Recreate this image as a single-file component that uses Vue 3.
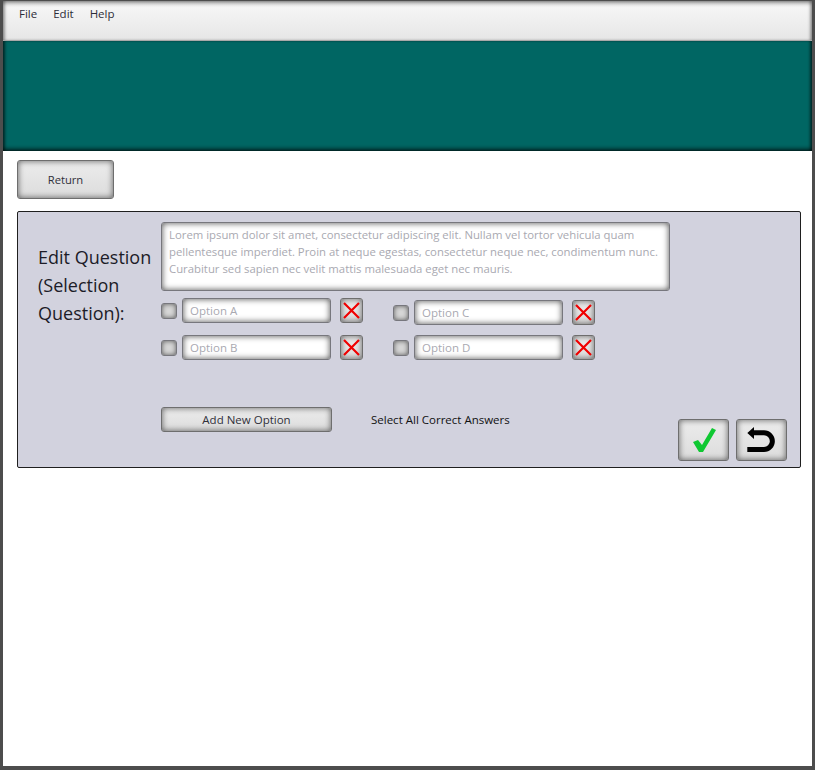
<template>
  <div class="window">
    <!-- menu -->
    <div class="menu-bar">
      <span v-for="item in menus" :key="item" class="menu-item">{{ item }}</span>
    </div>
    <div class="banner"></div>

    <div class="content">
      <button class="btn return-btn">Return</button>

      <div class="panel">
        <div class="question-label">Edit Question (Selection Question):</div>

        <div class="editor">
          <div class="input question-text">
            Lorem ipsum dolor sit amet, consectetur adipiscing elit. Nullam vel tortor vehicula quam pellentesque imperdiet. Proin at neque egestas, consectetur neque nec, condimentum nunc. Curabitur sed sapien nec velit mattis malesuada eget nec mauris.
          </div>

          <div class="options">
            <div v-for="(col, i) in columns" :key="i" :class="['option-col', { shifted: i === 1 }]">
              <div v-for="opt in col" :key="opt" class="option-row">
                <span class="check"></span>
                <div class="input option-input">{{ opt }}</div>
                <button class="btn remove-btn">
                  <svg width="17" height="17" viewBox="0 0 17 17">
                    <path d="M1 1 16 16M16 1 1 16" stroke="#f00000" stroke-width="2.2" fill="none" />
                  </svg>
                </button>
              </div>
            </div>
          </div>

          <div class="footer-row">
            <button class="btn add-btn">Add New Option</button>
            <span class="hint">Select All Correct Answers</span>
            <div class="actions">
              <button class="btn action-btn">
                <svg width="49" height="40" viewBox="0 0 49 40">
                  <path d="M14 22 19 20 23 25 33 8 37 10 24 32H20Z" fill="#0fc832" />
                </svg>
              </button>
              <button class="btn action-btn">
                <svg width="49" height="40" viewBox="0 0 49 40">
                  <path d="M10.300 13 17 7V10.300H27A10.850 10.850 0 0 1 27 32H10.300V27H27A5.850 5.850 0 0 0 27 15.300H17V19Z" fill="#000" />
                </svg>
              </button>
            </div>
          </div>
        </div>
      </div>
    </div>
  </div>
</template>

<script setup>
const menus = ['File', 'Edit', 'Help']
const columns = [
  ['Option A', 'Option B'],
  ['Option C', 'Option D']
]
</script>

<style>
html,
body {
  margin: 0;
  background: #fff;
}
</style>

<style scoped>
.window {
  box-sizing: border-box;
  width: 815px;
  height: 770px;
  border: solid #4d4d4d;
  border-width: 1px 3px 4px 3px;
  background: #fff;
  font-family: "Open Sans", "Noto Sans", sans-serif;
  overflow: hidden;
}

.menu-bar {
  box-sizing: border-box;
  height: 40px;
  display: flex;
  align-items: flex-start;
  padding: 5px 0 0 16px;
  gap: 16px;
  background: linear-gradient(#f8f8f8, #e6e6e6);
  border-bottom: 1px solid #a9a9a9;
  box-shadow: inset 0 3px 4px -1px rgba(0, 0, 0, 0.45), inset 3px 0 3px -1px rgba(0, 0, 0, 0.3), inset -3px 0 3px -1px rgba(0, 0, 0, 0.3);
}

.menu-item {
  font-size: 11.500px;
  line-height: 16px;
  color: #2c2c38;
}

.banner {
  height: 110px;
  background: #006663;
  box-shadow: inset 0 -3px 4px -1px rgba(0, 0, 0, 0.7), inset 3px 0 3px -1px rgba(0, 0, 0, 0.5), inset -3px 0 3px -1px rgba(0, 0, 0, 0.5);
}

.content {
  padding: 9px 11px 0 14px;
}

.btn {
  box-sizing: border-box;
  display: flex;
  align-items: center;
  justify-content: center;
  padding: 0;
  border: 1px solid #6e6e6e;
  border-radius: 3px;
  background: linear-gradient(#ececec, #dcdcdc);
  box-shadow: inset 0 0 6px rgba(0, 0, 0, 0.6);
  font-family: inherit;
  font-size: 11.500px;
  color: #30303a;
}

.return-btn {
  width: 97px;
  height: 39px;
  font-size: 11.200px;
}

.panel {
  box-sizing: border-box;
  height: 257px;
  margin-top: 12px;
  display: flex;
  background: #d2d2de;
  border: 1px solid #1f1f1f;
  border-radius: 2px;
  padding: 10px 13px 6px 20px;
}

.question-label {
  flex: none;
  width: 123px;
  padding-top: 21px;
  font-size: 18px;
  line-height: 28px;
  color: #1c1c28;
}

.editor {
  flex: 1;
  display: flex;
  flex-direction: column;
}

.input {
  box-sizing: border-box;
  border: 1px solid #77777d;
  border-radius: 3px;
  background: #fff;
  box-shadow: inset 0 0 6px rgba(0, 0, 0, 0.7);
  color: #a9a9b1;
  font-size: 11.500px;
}

.question-text {
  width: 509px;
  height: 69px;
  padding: 3px 7px;
  font-size: 11.350px;
  line-height: 17px;
}

.options {
  display: flex;
  gap: 30px;
  margin-top: 7px;
}

.option-col {
  display: flex;
  flex-direction: column;
  gap: 12px;
}

.option-col.shifted {
  gap: 10px;
  padding-top: 2px;
}

.option-row {
  display: flex;
  align-items: center;
  height: 25px;
}

.check {
  box-sizing: border-box;
  width: 16px;
  height: 16px;
  margin-right: 5px;
  border: 1px solid #77777d;
  border-radius: 3px;
  background: #d6d6d6;
  box-shadow: inset 0 0 5px rgba(0, 0, 0, 0.6);
}

.option-input {
  width: 149px;
  height: 25px;
  padding-left: 7px;
  line-height: 23px;
}

.remove-btn {
  width: 23px;
  height: 25px;
  margin-left: 9px;
}

.footer-row {
  flex: 1;
  display: flex;
  align-items: flex-start;
  position: relative;
  padding-top: 47px;
}

.add-btn {
  width: 171px;
  height: 25px;
}

.hint {
  margin-left: 39px;
  font-size: 11.500px;
  line-height: 25px;
  color: #111;
}

.actions {
  margin-left: auto;
  margin-top: 12px;
  display: flex;
  gap: 7px;
}

.action-btn {
  width: 51px;
  height: 42px;
}
</style>
